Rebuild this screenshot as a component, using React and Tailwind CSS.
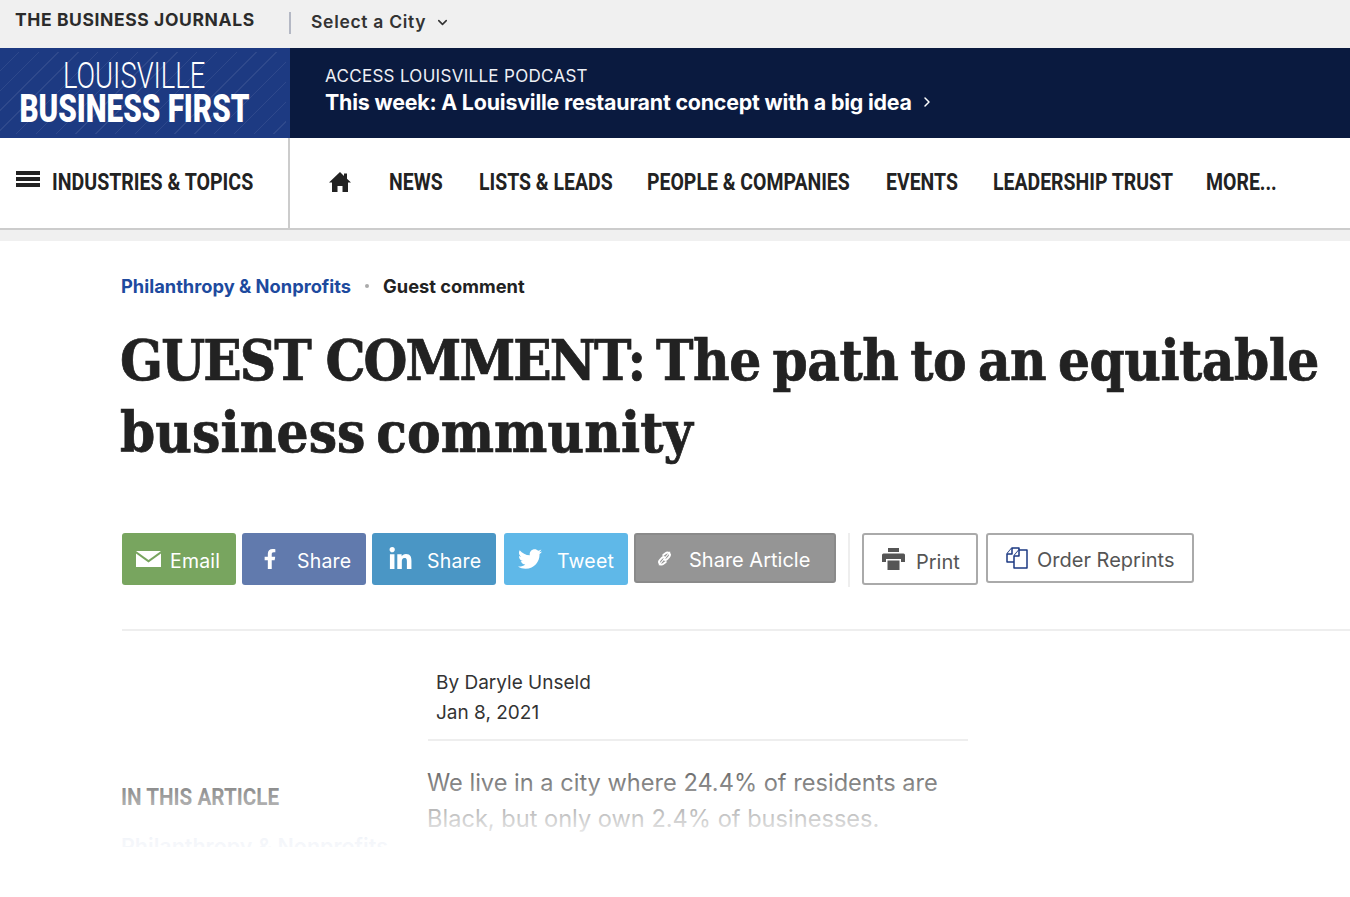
import { ChevronDown, ChevronRight } from 'lucide-react'
import { FaFacebookF, FaLinkedinIn, FaTwitter } from 'react-icons/fa'

const NAV = [
  { label: 'NEWS', width: 'w-[54px]' },
  { label: 'LISTS & LEADS', width: 'w-[132px]' },
  { label: 'PEOPLE & COMPANIES', width: 'w-[203px]' },
  { label: 'EVENTS', width: 'w-[71px]' },
  { label: 'LEADERSHIP TRUST', width: 'w-[177px]' },
  { label: 'MORE...', width: 'w-[71px]' },
]

const sans = "font-['Inter','Liberation_Sans',sans-serif]"
const narrow = "font-['Roboto','Liberation_Sans',sans-serif]"

function HomeIcon() {
  return (
    <svg width="22" height="20" viewBox="0 0 22 20" fill="#222" className="mr-[38px]">
      <path d="M11 0L0 10.5h3V20h5.500v-6h5v6H19v-9.500h3l-4-3.800V1.500h-3v2.400z" />
    </svg>
  )
}

function MailIcon() {
  return (
    <svg width="25" height="16" viewBox="0 0 25 16" fill="white">
      <path d="M0 0h25L12.500 9z" />
      <path d="M0 2.600v13.400h25V2.600L12.500 11.600z" />
    </svg>
  )
}

function LinkIcon() {
  return (
    <svg width="17" height="17" viewBox="0 0 16 16" fill="none" stroke="white" strokeWidth="1.8" strokeLinecap="round">
      <path d="M6.800 4.800L9 3c1.100-.9 2.500-.8 3.400.1s.9 2.300 0 3.300L10.500 8.500c-1 1-2.200 1-3 .3" />
      <path d="M9.200 11.200L7 13c-1.100.9-2.500.8-3.400-.1s-.9-2.300 0-3.300L5.500 7.500c1-1 2.200-1 3-.3" />
      <path d="M13 2L3 14" strokeWidth="1" />
    </svg>
  )
}

function PrintIcon() {
  return (
    <svg width="23" height="22" viewBox="0 0 23 22" fill="#555">
      <path d="M6 0h11v4H6z" />
      <path d="M1.500 5.500h20a1.500 1.500 0 0 1 1.500 1.500v7h-4v-3H4v3H0V7a1.500 1.500 0 0 1 1.500-1.500z" />
      <path d="M5.500 12.500h12V22h-12z" />
    </svg>
  )
}

function ReprintIcon() {
  return (
    <svg width="24" height="24" viewBox="0 0 24 24" fill="white" stroke="#1d3a82" strokeWidth="1.500" strokeLinejoin="round">
      <path d="M2 8l5-6h7v14H2z" />
      <path d="M9 10l5-6h8v18H9z" />
      <path d="M9 10h5V4" />
      <path d="M2 8h5V2" />
    </svg>
  )
}

function ShareButton({ color, icon, label, width, gap }) {
  return (
    <div className={`flex items-center h-[52px] rounded-[3px] text-white text-[19.5px] pl-[14px] ${color} ${width} ${gap}`}>
      {icon}
      <span className="tracking-[0.2px] pt-[5px]">{label}</span>
    </div>
  )
}

export default function App() {
  return (
    <div className={`relative h-[897px] w-[1350px] overflow-hidden bg-white text-[#222] ${sans}`}>
      {/* Top strip */}
      <div className="flex h-12 items-center bg-[#f0f0f0]">
        <div className="w-[290px] pl-[15px] pb-[7px] text-[17.5px] font-bold tracking-[0.6px] text-[#2b2b2b]">THE BUSINESS JOURNALS</div>
        <div className="mb-[3px] ml-[-1px] flex h-[22px] items-center border-l-2 border-[#b4b8c4] pl-[20px] text-[17.5px] font-semibold tracking-[0.7px] text-[#333]">
          Select a City
          <ChevronDown size={15} strokeWidth={2.5} className="ml-[9px]" />
        </div>
      </div>

      {/* Banner */}
      <div className="flex h-[90px] bg-[#0a1a3f]">
        <div className="flex w-[290px] bg-[#1d3a82] py-1 pr-1">
          <div className="flex w-[286px] flex-col items-center bg-[repeating-linear-gradient(135deg,transparent_0,transparent_13px,rgba(255,255,255,0.08)_13px,rgba(255,255,255,0.08)_14px)] pt-[5px] pr-[18px] text-white">
            <div className={`h-[37px] origin-center scale-x-[0.74] text-[37px] leading-[37px] font-light whitespace-nowrap ${narrow}`}>LOUISVILLE</div>
            <div className={`-mt-[2px] h-[34px] origin-center scale-x-[0.78] text-[38px] leading-[34px] font-black whitespace-nowrap ${narrow}`}>BUSINESS FIRST</div>
          </div>
        </div>
        <div className="flex flex-col pl-[35px] pt-[18px] text-white">
          <div className="text-[17px] leading-5 tracking-[0.3px] text-[#eef0f5]">ACCESS LOUISVILLE PODCAST</div>
          <div className="mt-[4px] flex items-center text-[21.4px] leading-6 font-bold tracking-[-0.2px]">
            This week: A Louisville restaurant concept with a big idea
            <ChevronRight size={16} strokeWidth={2.2} className="ml-[7px]" />
          </div>
        </div>
      </div>

      {/* Nav */}
      <div className="flex h-[92px] border-b-2 border-[#ccc] text-[#222]">
        <div className="flex w-[290px] items-center border-r-2 border-[#ccc] pl-4 pb-[2px]">
          <div className="mb-[6px] flex flex-col gap-[2px]">
            <div className="h-[4px] w-6 bg-[#222]" />
            <div className="h-[4px] w-6 bg-[#222]" />
            <div className="h-[4px] w-6 bg-[#222]" />
          </div>
          <span className={`ml-3 inline-block w-[200px] origin-left scale-x-[0.815] text-[24px] font-bold whitespace-nowrap ${narrow}`}>INDUSTRIES &amp; TOPICS</span>
        </div>
        <div className="flex items-center pb-[2px] pl-[39px]">
          <HomeIcon />
          <div className={`flex gap-9 text-[24px] font-bold whitespace-nowrap ${narrow}`}>
            {NAV.map(item => (
              <span key={item.label} className={`inline-block origin-left scale-x-[0.81] ${item.width}`}>{item.label}</span>
            ))}
          </div>
        </div>
      </div>
      <div className="h-[11px] bg-[#f0f0f0]" />

      {/* Article head */}
      <div className="pl-[122px]">
        <div className="mt-[33px] ml-[-1px] flex items-center text-[18.3px] leading-6 font-bold">
          <span className="text-[#1d4a9e]">Philanthropy &amp; Nonprofits</span>
          <span className="mx-[14px] h-1 w-1 rounded-full bg-[#aaa]" />
          <span className="text-[#222]">Guest comment</span>
        </div>
        <h1 className="mt-[26px] ml-[-2px] font-['DejaVu_Serif_Condensed','DejaVu_Serif',serif] text-[56px] leading-[72px] font-bold whitespace-nowrap text-[#222] [-webkit-text-stroke:0.7px_#222]">
          <span className="tracking-[-1.9px]">GUEST COMMENT:</span>
          <span className="tracking-[-0.5px] [word-spacing:-5.2px]"> The path to an equitable</span>
          <br />
          <span className="tracking-[0.1px] [word-spacing:-7px]">business community</span>
        </h1>

        {/* Share row */}
        <div className="mt-[65px] flex items-start">
          <ShareButton color="bg-[#78a55f]" width="w-[114px]" gap="gap-[9px]" label="Email" icon={<MailIcon />} />
          <ShareButton color="bg-[#617aad] ml-[6px]" width="w-[124px]" gap="gap-[17px]" label="Share" icon={<FaFacebookF size={20} className="ml-[4px]" />} />
          <ShareButton color="bg-[#4a96c5] ml-[6px]" width="w-[124px]" gap="gap-[14px]" label="Share" icon={<FaLinkedinIn size={25} className="ml-[2px]" />} />
          <ShareButton color="bg-[#5fb8e8] ml-[8px]" width="w-[124px]" gap="gap-[15px]" label="Tweet" icon={<FaTwitter size={24} />} />
          <div className="ml-[6px] flex h-[50px] w-[202px] items-center gap-[16px] rounded-[3px] border-2 border-[#8a8a8a] bg-[#959595] pl-[20px] text-[20px] text-white">
            <LinkIcon />
            <span className="pt-[3px]">Share Article</span>
          </div>
          <div className="mx-[12px] h-[54px] w-[2px] bg-[#eee]" />
          <div className="flex h-[52px] w-[116px] items-center gap-[11px] rounded-[3px] border-2 border-[#aaa] pl-[18px] text-[20px] text-[#555]">
            <PrintIcon />
            <span className="pt-[5px]">Print</span>
          </div>
          <div className="ml-[8px] flex h-[50px] w-[208px] items-center gap-[8px] rounded-[3px] border-2 border-[#aaa] pl-[17px] text-[20px] text-[#555]">
            <ReprintIcon />
            <span className="pt-[3px]">Order Reprints</span>
          </div>
        </div>
        <div className="mt-[42px] h-[2px] bg-[#eee]" />

        {/* Article body */}
        <div className="flex">
          <div className="w-[306px] pt-[150px]">
            <div className={`ml-[-1px] inline-block w-[158px] origin-left scale-x-[0.86] text-[24px] leading-8 font-bold whitespace-nowrap text-[#444] ${narrow}`}>IN THIS ARTICLE</div>
            <div className="mt-[21px] ml-[-1px] text-[21.5px] leading-6 font-semibold whitespace-nowrap text-[#1d4a9e]">Philanthropy &amp; Nonprofits</div>
          </div>
          <div className="w-[540px]">
            <div className="mt-[37px] border-b-2 border-[#eee] pb-[11px] pl-2 text-[19px] leading-[30px] text-[#333]">
              <div>By Daryle Unseld</div>
              <div>Jan 8, 2021</div>
            </div>
            <p className="mt-[24px] ml-[-1px] text-[23.6px] leading-9 text-[#444]">
              We live in a city where 24.4% of residents are Black, but only own 2.4% of businesses.
            </p>
          </div>
        </div>
      </div>

      {/* Fade over the truncated article */}
      <div className="absolute right-0 bottom-0 left-0 h-[145px] bg-gradient-to-b from-transparent via-white/95 via-60% to-white" />
      <div className="absolute right-0 bottom-0 left-0 h-[50px] bg-white" />
    </div>
  )
}
